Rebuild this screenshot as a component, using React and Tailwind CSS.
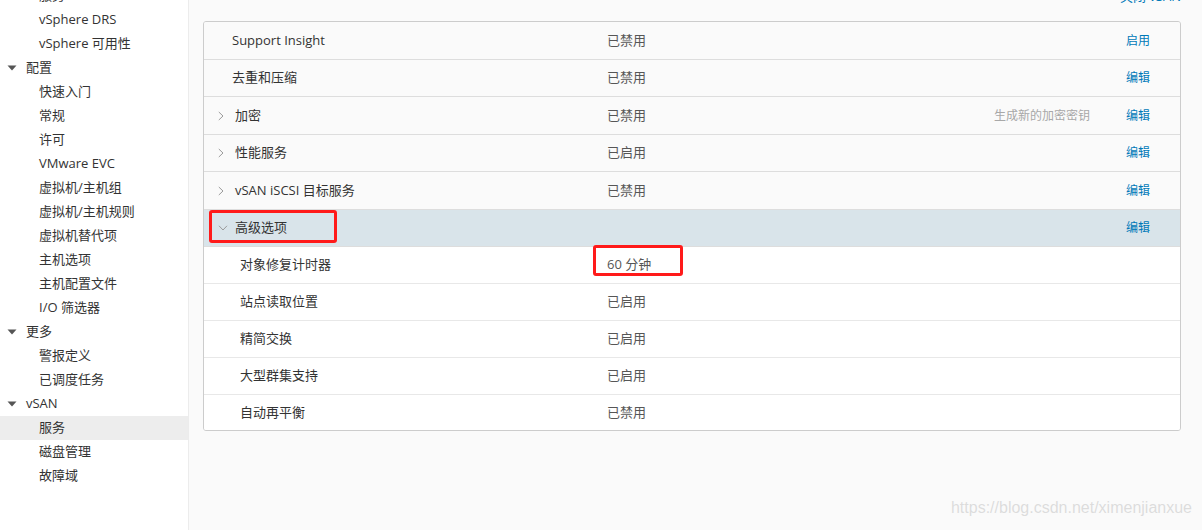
import React from 'react';

const font = { fontFamily: '"Open Sans", "Noto Sans CJK SC", sans-serif' };

const nav = [
  { label: '服务', level: 1 },
  { label: 'vSphere DRS', level: 1 },
  { label: 'vSphere 可用性', level: 1 },
  { label: '配置', level: 0 },
  { label: '快速入门', level: 1 },
  { label: '常规', level: 1 },
  { label: '许可', level: 1 },
  { label: 'VMware EVC', level: 1 },
  { label: '虚拟机/主机组', level: 1 },
  { label: '虚拟机/主机规则', level: 1 },
  { label: '虚拟机替代项', level: 1 },
  { label: '主机选项', level: 1 },
  { label: '主机配置文件', level: 1 },
  { label: 'I/O 筛选器', level: 1 },
  { label: '更多', level: 0 },
  { label: '警报定义', level: 1 },
  { label: '已调度任务', level: 1 },
  { label: 'vSAN', level: 0 },
  { label: '服务', level: 1, active: true },
  { label: '磁盘管理', level: 1 },
  { label: '故障域', level: 1 },
];

const services = [
  { label: 'Support Insight', value: '已禁用', action: '启用', h: 'h-[38px]' },
  { label: '去重和压缩', value: '已禁用', action: '编辑', h: 'h-[37px]' },
  { label: '加密', value: '已禁用', action: '编辑', chevron: 'right', hint: '生成新的加密密钥', h: 'h-[38px]' },
  { label: '性能服务', value: '已启用', action: '编辑', chevron: 'right', h: 'h-[37px]' },
  { label: 'vSAN iSCSI 目标服务', value: '已禁用', action: '编辑', chevron: 'right', h: 'h-[38px]' },
  { label: '高级选项', value: '', action: '编辑', chevron: 'down', open: true, h: 'h-[37px]' },
];

const advanced = [
  { label: '对象修复计时器', value: '60 分钟' },
  { label: '站点读取位置', value: '已启用' },
  { label: '精简交换', value: '已启用' },
  { label: '大型群集支持', value: '已启用' },
  { label: '自动再平衡', value: '已禁用' },
];

function Caret() {
  return (
    <svg width="10" height="6" viewBox="0 0 10 6" className="shrink-0">
      <path d="M0.5 0.5 L9.5 0.5 L5 5.5 Z" fill="#555" />
    </svg>
  );
}

function Chevron({ dir }) {
  if (dir === 'down') {
    return (
      <svg width="10" height="6" viewBox="0 0 10 6" className="shrink-0">
        <path d="M1 0.8 L5 5 L9 0.8" fill="none" stroke="#9a9a9a" strokeWidth="1" />
      </svg>
    );
  }
  return (
    <svg width="6" height="10" viewBox="0 0 6 10" className="shrink-0">
      <path d="M0.8 1 L5 5 L0.8 9" fill="none" stroke="#9a9a9a" strokeWidth="1" />
    </svg>
  );
}

export default function App() {
  return (
    <div className="relative flex h-[530px] w-[1202px] overflow-hidden bg-[#fafafa] text-[13px]" style={font}>
      <aside className="w-[189px] shrink-0 border-r border-[#ececec] bg-white">
        <ul className="-mt-[16px]">
          {nav.map((item, i) => (
            <li
              key={i}
              className={`flex h-[24px] items-center text-[#333] ${item.active ? 'bg-[#ededed]' : ''} ${item.level === 0 ? 'pl-[7px] gap-[9px]' : 'pl-[39px]'}`}
            >
              {item.level === 0 && <Caret />}
              <span>{item.label}</span>
            </li>
          ))}
        </ul>
      </aside>

      <main className="flex-1 pl-[14px]">
        <div className="flex h-[21px] items-start justify-end pr-[21px]">
          <span className="-mt-[10px] leading-[13px] text-[#0079b8]">关闭 vSAN</span>
        </div>

        <div className="relative w-[978px] overflow-hidden rounded-[3px] border border-[#cccccc]">
          {services.map((row, i) => (
            <div
              key={i}
              className={`flex ${row.h} items-center border-b border-[#dddddd] ${row.open ? 'bg-[#d9e4ea]' : 'bg-[#fafafa]'}`}
            >
              <div className={`flex w-[403px] items-center text-[#333] ${row.chevron ? 'pl-[14px]' : 'pl-[28px]'}`}>
                {row.chevron && (
                  <span className="flex w-[17px] items-center">
                    <Chevron dir={row.chevron} />
                  </span>
                )}
                <span>{row.label}</span>
              </div>
              <div className="flex-1 text-[#565656]">{row.value}</div>
              {row.hint && <div className="mr-[36px] text-[12px] text-[#a8a8a8]">{row.hint}</div>}
              <div className="mr-[30px] text-[12px] text-[#0079b8]">{row.action}</div>
            </div>
          ))}
          {advanced.map((row, i) => (
            <div
              key={i}
              className={`flex items-center bg-white ${i < advanced.length - 1 ? 'h-[37px] border-b border-[#e8e8e8]' : 'h-[35px]'}`}
            >
              <div className="w-[403px] pl-[36px] text-[#333]">{row.label}</div>
              <div className="flex-1 text-[#565656]">{row.value}</div>
            </div>
          ))}

          <div className="pointer-events-none absolute left-[5px] top-[188px] h-[33px] w-[128px] rounded-[3px] border-[3px] border-[#ff1a1a]" />
          <div className="pointer-events-none absolute left-[389px] top-[223px] h-[31px] w-[90px] rounded-[3px] border-[3px] border-[#ff1a1a]" />
        </div>
      </main>

      <div
        className="pointer-events-none absolute bottom-[10px] right-[10px] text-[16px] text-[#dcdcdc]"
        style={{ fontFamily: '"Liberation Sans", Arial, sans-serif', textShadow: '0 0 1px #fff' }}
      >
        https://blog.csdn.net/ximenjianxue
      </div>
    </div>
  );
}
